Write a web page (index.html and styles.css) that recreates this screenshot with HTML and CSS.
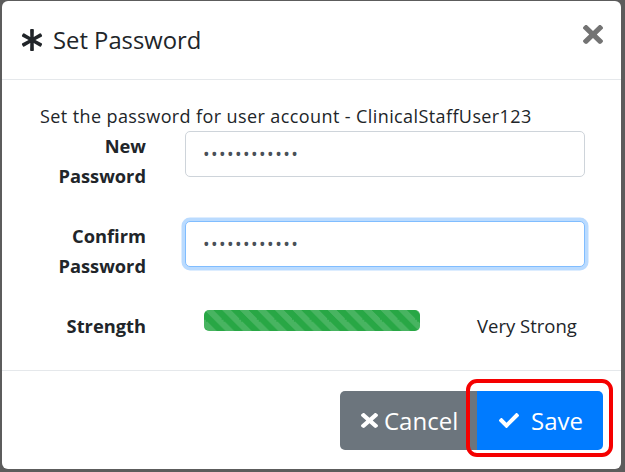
FILE: index.html
```html
<!DOCTYPE html>
<html lang="en">
<head>
<meta charset="utf-8">
<title>Set Password</title>
<link rel="stylesheet" href="styles.css">
</head>
<body>
<div class="modal">
  <div class="modal-header">
    <h5 class="modal-title">
      <svg class="title-icon" viewBox="0 0 512 512" aria-hidden="true"><path d="M478.21 334.093L336 256l142.21-78.093c11.795-6.477 15.961-21.384 9.232-33.037l-19.48-33.741c-6.728-11.653-21.72-15.499-33.227-8.523L296 186.718l3.475-162.204C299.763 11.061 288.937 0 275.48 0h-38.96c-13.456 0-24.283 11.061-23.994 24.514L216 186.718 77.265 102.607c-11.506-6.976-26.499-3.130-33.227 8.523l-19.48 33.741c-6.728 11.653-2.562 26.56 9.233 33.037L176 256 33.79 334.093c-11.795 6.477-15.961 21.384-9.232 33.037l19.48 33.741c6.728 11.653 21.721 15.499 33.227 8.523L216 325.282l-3.475 162.204C212.237 500.939 223.064 512 236.52 512h38.961c13.456 0 24.283-11.061 23.995-24.514L296 325.282l138.735 84.111c11.506 6.976 26.499 3.13 33.227-8.523l19.48-33.741c6.728-11.653 2.563-26.559-9.232-33.036z"/></svg>
      <span>Set Password</span>
    </h5>
    <button class="close" type="button" aria-label="Close">
      <svg viewBox="0 80 352 352" preserveAspectRatio="none" aria-hidden="true"><path d="M242.72 256l100.07-100.07c12.28-12.28 12.28-32.19 0-44.48l-22.24-22.24c-12.28-12.28-32.19-12.28-44.48 0L176 189.280 75.930 89.210c-12.28-12.28-32.19-12.28-44.48 0L9.21 111.45c-12.28 12.28-12.28 32.19 0 44.48L109.28 256 9.21 356.07c-12.28 12.28-12.28 32.19 0 44.48l22.24 22.24c12.28 12.28 32.2 12.28 44.48 0L176 322.72l100.07 100.07c12.28 12.28 32.2 12.28 44.48 0l22.24-22.24c12.28-12.28 12.28-32.19 0-44.48L242.72 256z"/></svg>
    </button>
  </div>
  <div class="modal-body">
    <p class="intro">Set the password for user account - ClinicalStaffUser123</p>
    <div class="form-row">
      <label class="form-label" for="pw1">New Password</label>
      <input class="form-control" id="pw1" type="password" value="ClinicalPw12" readonly>
    </div>
    <div class="form-row">
      <label class="form-label" for="pw2">Confirm Password</label>
      <input class="form-control is-focused" id="pw2" type="password" value="ClinicalPw12" readonly>
    </div>
    <div class="form-row strength-row">
      <span class="form-label">Strength</span>
      <div class="progress"><div class="progress-bar" style="width:100%"></div></div>
      <span class="strength-text">Very Strong</span>
    </div>
  </div>
  <div class="modal-footer">
    <div class="btn-group">
      <button class="btn btn-secondary" type="button">
        <svg class="icon-times" viewBox="0 80 352 352" preserveAspectRatio="none" aria-hidden="true"><path d="M242.72 256l100.07-100.07c12.28-12.28 12.28-32.19 0-44.48l-22.24-22.240c-12.28-12.28-32.19-12.28-44.48 0L176 189.28 75.93 89.21c-12.28-12.28-32.19-12.28-44.48 0L9.21 111.45c-12.28 12.28-12.28 32.19 0 44.48L109.28 256 9.21 356.07c-12.28 12.28-12.28 32.19 0 44.48l22.24 22.24c12.28 12.28 32.2 12.28 44.48 0L176 322.72l100.07 100.07c12.28 12.28 32.2 12.28 44.48 0l22.24-22.24c12.28-12.28 12.28-32.19 0-44.48L242.72 256z"/></svg>
        <span>Cancel</span>
      </button>
      <button class="btn btn-primary" type="button">
        <svg class="icon-check" viewBox="0 65 512 384" aria-hidden="true"><path d="M173.898 439.404l-166.4-166.4c-9.997-9.997-9.997-26.206 0-36.204l36.203-36.204c9.997-9.998 26.207-9.998 36.204 0L192 312.69 432.095 72.596c9.997-9.997 26.207-9.997 36.204 0l36.203 36.204c9.997 9.997 9.997 26.206 0 36.204l-294.4 294.401c-9.998 9.997-26.207 9.997-36.204-.001z"/></svg>
        <span>Save</span>
        <span class="highlight" aria-hidden="true"></span>
      </button>
    </div>
  </div>
</div>
</body>
</html>
```

FILE: styles.css
```css
* {
  box-sizing: border-box;
}

html, body {
  margin: 0;
  padding: 0;
}

body {
  width: 625px;
  height: 472px;
  background: #5c5c5c;
  font-family: "Open Sans", "Noto Sans", sans-serif;
  color: #212529;
  overflow: hidden;
  padding-top: 1px;
  padding-left: 2px;
}

.modal {
  width: 619px;
  height: 468px;
  background: #fff;
  border-radius: 6px;
  display: flex;
  flex-direction: column;
}

.modal-header {
  height: 79px;
  border-bottom: 1px solid #e5e8eb;
  display: flex;
  align-items: center;
  justify-content: space-between;
  padding: 0 18px 0 19px;
}

.modal-title {
  margin: 0;
  display: flex;
  align-items: center;
  font-size: 23.8px;
  font-weight: 400;
  line-height: 1.2;
  color: #212529;
}

.title-icon {
  width: 22px;
  height: 22px;
  fill: #212529;
  margin-right: 10px;
}

.close {
  border: 0;
  background: none;
  padding: 0;
  margin: 0 0 11px 0;
  width: 20px;
  height: 19px;
  display: flex;
}

.close svg {
  width: 20px;
  height: 19px;
  fill: #737373;
}

.modal-body {
  flex: 1;
  padding: 21px 20px 0 38px;
  font-size: 18px;
}

.intro {
  margin: 0;
  line-height: 30px;
  font-size: 18px;
  letter-spacing: 0.4px;
}

.form-row {
  display: flex;
  align-items: flex-start;
  margin-bottom: 30px;
}

.form-label {
  width: 106px;
  text-align: right;
  font-weight: 700;
  line-height: 30px;
  font-size: 18.3px;
}

.form-control {
  margin-left: 39px;
  width: 400px;
  height: 46px;
  border: 1px solid #ced4da;
  border-radius: 5px;
  padding: 0 17px;
  font-family: "Open Sans", sans-serif;
  font-size: 17.6px;
  color: #495057;
  letter-spacing: 1.4px;
  background: #fff;
  outline: none;
}

.form-control.is-focused {
  border-color: #80bdff;
  box-shadow: 0 0 0 3.5px rgba(0, 123, 255, 0.27);
}

.strength-row {
  margin-bottom: 0;
}

.progress {
  margin-left: 58px;
  margin-top: -1px;
  width: 216px;
  height: 21px;
  border-radius: 5px;
  background: #e9ecef;
  overflow: hidden;
  display: flex;
}

.progress-bar {
  height: 100%;
  background-color: #28a745;
  background-image: linear-gradient(45deg,
    rgba(255, 255, 255, 0.15) 25%, transparent 25%,
    transparent 50%, rgba(255, 255, 255, 0.15) 50%,
    rgba(255, 255, 255, 0.15) 75%, transparent 75%, transparent);
  background-size: 17.6px 17.6px;
}

.strength-text {
  margin-left: 57px;
  line-height: 30px;
  font-size: 18.5px;
}

.modal-footer {
  border-top: 1px solid #e5e8eb;
  padding: 20px 18px 19px 0;
  display: flex;
  justify-content: flex-end;
}

.btn-group {
  display: flex;
}

.btn {
  height: 59px;
  border: 0;
  color: #fff;
  font-family: "Open Sans", sans-serif;
  font-size: 24px;
  display: flex;
  align-items: center;
  padding: 0;
  line-height: 1;
}

.btn svg {
  fill: #fff;
  flex: none;
}

.btn-secondary {
  background: #6c757d;
  border-radius: 5px 0 0 5px;
  width: 137px;
  padding-left: 21px;
}

.icon-times {
  width: 17px;
  height: 15px;
  margin-right: 6px;
}

.btn-primary {
  position: relative;
  background: #007bff;
  border-radius: 0 5px 5px 0;
  width: 126px;
  padding-left: 22px;
}

.icon-check {
  width: 20px;
  height: 15px;
  margin-right: 12px;
}

.highlight {
  position: absolute;
  left: -11px;
  top: -12px;
  right: -10px;
  bottom: -7px;
  border: 4px solid #f50000;
  border-radius: 11px;
  pointer-events: none;
}
```
